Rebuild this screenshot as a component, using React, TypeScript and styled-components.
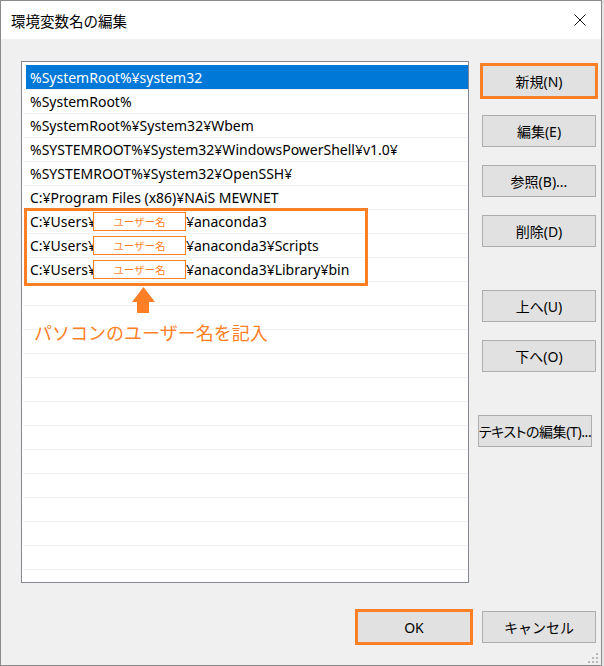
import styled, { createGlobalStyle } from "styled-components";

const ORANGE = "#ff7f27";

const GlobalStyle = createGlobalStyle`
  html, body {
    margin: 0;
    padding: 0;
  }
  body {
    width: 604px;
    height: 666px;
    overflow: hidden;
    background: #e4e4e4;
    font-family: "Noto Sans", "Noto Sans CJK JP", sans-serif;
  }
`;

type PathRow = { parts: (string | null)[] };

// null marks the place where the user name has to go
const rows: PathRow[] = [
  { parts: ["%SystemRoot%¥system32"] },
  { parts: ["%SystemRoot%"] },
  { parts: ["%SystemRoot%¥System32¥Wbem"] },
  { parts: ["%SYSTEMROOT%¥System32¥WindowsPowerShell¥v1.0¥"] },
  { parts: ["%SYSTEMROOT%¥System32¥OpenSSH¥"] },
  { parts: ["C:¥Program Files (x86)¥NAiS MEWNET"] },
  { parts: ["C:¥Users¥", null, "¥anaconda3"] },
  { parts: ["C:¥Users¥", null, "¥anaconda3¥Scripts"] },
  { parts: ["C:¥Users¥", null, "¥anaconda3¥Library¥bin"] },
];

const EMPTY_ROWS = 13;

export default function App() {
  return (
    <>
      <GlobalStyle />
      <Window>
        <TitleBar>
          <Title>環境変数名の編集</Title>
          <svg width="12" height="12" viewBox="0 0 12 12">
            <path d="M0.5 0.5 L11.5 11.5 M11.5 0.5 L0.5 11.5" stroke="#111" strokeWidth="1" />
          </svg>
        </TitleBar>
        <Body>
          <Main>
            <List>
              {rows.map((row, i) => (
                <Row key={i} $selected={i === 0}>
                  {row.parts.map((p, j) =>
                    p === null ? <UserBox key={j}>ユーザー名</UserBox> : <span key={j}>{p}</span>
                  )}
                </Row>
              ))}
              {Array.from({ length: EMPTY_ROWS }).map((_, i) => (
                <Row key={"e" + i} />
              ))}
              <OrangeFrame />
              <Arrow width="23" height="26" viewBox="0 0 23 26">
                <path d="M11.5 0 L23 15 L17 15 L17 26 L5 26 L5 15 L0 15 Z" fill={ORANGE} />
              </Arrow>
              <Note>パソコンのユーザー名を記入</Note>
            </List>
            <ButtonColumn>
              <Button $highlight>新規(N)</Button>
              <Button>編集(E)</Button>
              <Button>参照(B)...</Button>
              <Button>削除(D)</Button>
              <Button $space={25}>上へ(U)</Button>
              <Button>下へ(O)</Button>
              <Button $space={25} $shift={-4} $tight>
                テキストの編集(T)...
              </Button>
            </ButtonColumn>
          </Main>
          <Footer>
            <Button $highlight>OK</Button>
            <Button>キャンセル</Button>
          </Footer>
        </Body>
        <Grip width="11" height="11" viewBox="0 0 11 11">
          {[
            [9, 1],
            [5, 5],
            [9, 5],
            [1, 9],
            [5, 9],
            [9, 9],
          ].map(([x, y]) => (
            <rect key={`${x}-${y}`} x={x - 1} y={y - 1} width="2" height="2" fill="#b9b9b9" />
          ))}
        </Grip>
      </Window>
    </>
  );
}

const Window = styled.div`
  position: relative;
  width: 602px;
  height: 666px;
  box-sizing: border-box;
  border: 1px solid #8a8a8a;
  background: #f0f0f0;
  display: flex;
  flex-direction: column;
`;

const TitleBar = styled.div`
  flex: none;
  height: 38px;
  background: #fff;
  display: flex;
  align-items: center;
  justify-content: space-between;
  padding: 0 15px 0 10px;
`;

const Title = styled.span`
  font-family: "Noto Sans CJK JP", sans-serif;
  font-size: 14.5px;
  color: #000;
`;

const Body = styled.div`
  flex: 1;
  display: flex;
  flex-direction: column;
  padding: 22px 5px 0 20px;
`;

const Main = styled.div`
  display: flex;
  align-items: flex-start;
  gap: 13px;
`;

const List = styled.div`
  position: relative;
  width: 448px;
  height: 522px;
  box-sizing: border-box;
  border: 1px solid #828790;
  background: #fff;
  padding: 3px 0 0 1px;
  overflow: hidden;
`;

const Row = styled.div<{ $selected?: boolean }>`
  height: 24px;
  box-sizing: border-box;
  display: flex;
  align-items: center;
  padding-left: 7px;
  font-size: 14px;
  white-space: nowrap;
  color: ${(p) => (p.$selected ? "#fff" : "#000")};
  background: ${(p) =>
    p.$selected ? "linear-gradient(to right, #fff 3px, #0078d7 3px)" : "transparent"};

  & + & {
    border-top: 1px solid #f0f0f0;
  }
`;

const UserBox = styled.span`
  display: inline-flex;
  align-items: center;
  justify-content: center;
  width: 93px;
  height: 19px;
  margin-left: -3px;
  box-sizing: border-box;
  border: 1px solid ${ORANGE};
  background: #fff;
  color: ${ORANGE};
  font-family: "Noto Sans CJK JP", sans-serif;
  font-size: 10.5px;
`;

const OrangeFrame = styled.div`
  position: absolute;
  left: 2px;
  top: 146px;
  width: 344px;
  height: 78px;
  box-sizing: border-box;
  border: 3px solid ${ORANGE};
`;

const Arrow = styled.svg`
  position: absolute;
  left: 110px;
  top: 225px;
`;

const Note = styled.div`
  position: absolute;
  left: 12px;
  top: 258px;
  line-height: 24px;
  font-family: "Noto Sans CJK JP", sans-serif;
  font-size: 18px;
  color: ${ORANGE};
`;

const ButtonColumn = styled.div`
  display: flex;
  flex-direction: column;
  gap: 18px;
  padding-top: 4px;
  width: 114px;
`;

const Button = styled.div<{
  $highlight?: boolean;
  $space?: number;
  $shift?: number;
  $tight?: boolean;
}>`
  width: 114px;
  height: 32px;
  box-sizing: border-box;
  border: 1px solid #adadad;
  background: #e1e1e1;
  display: flex;
  align-items: center;
  justify-content: center;
  font-family: "Noto Sans", "Noto Sans CJK JP", sans-serif;
  font-size: 14px;
  color: #000;
  white-space: nowrap;
  overflow: hidden;
  margin-top: ${(p) => p.$space ?? 0}px;
  margin-left: ${(p) => p.$shift ?? 0}px;
  outline: ${(p) => (p.$highlight ? `3px solid ${ORANGE}` : "none")};
  outline-offset: -1px;
  font-feature-settings: ${(p) => (p.$tight ? '"palt"' : "normal")};
  letter-spacing: ${(p) => (p.$tight ? "-0.4px" : "normal")};
`;

const Footer = styled.div`
  margin-top: auto;
  display: flex;
  justify-content: flex-end;
  gap: 11px;
  padding-bottom: 22px;
`;

const Grip = styled.svg`
  position: absolute;
  right: 2px;
  bottom: 1px;
`;
